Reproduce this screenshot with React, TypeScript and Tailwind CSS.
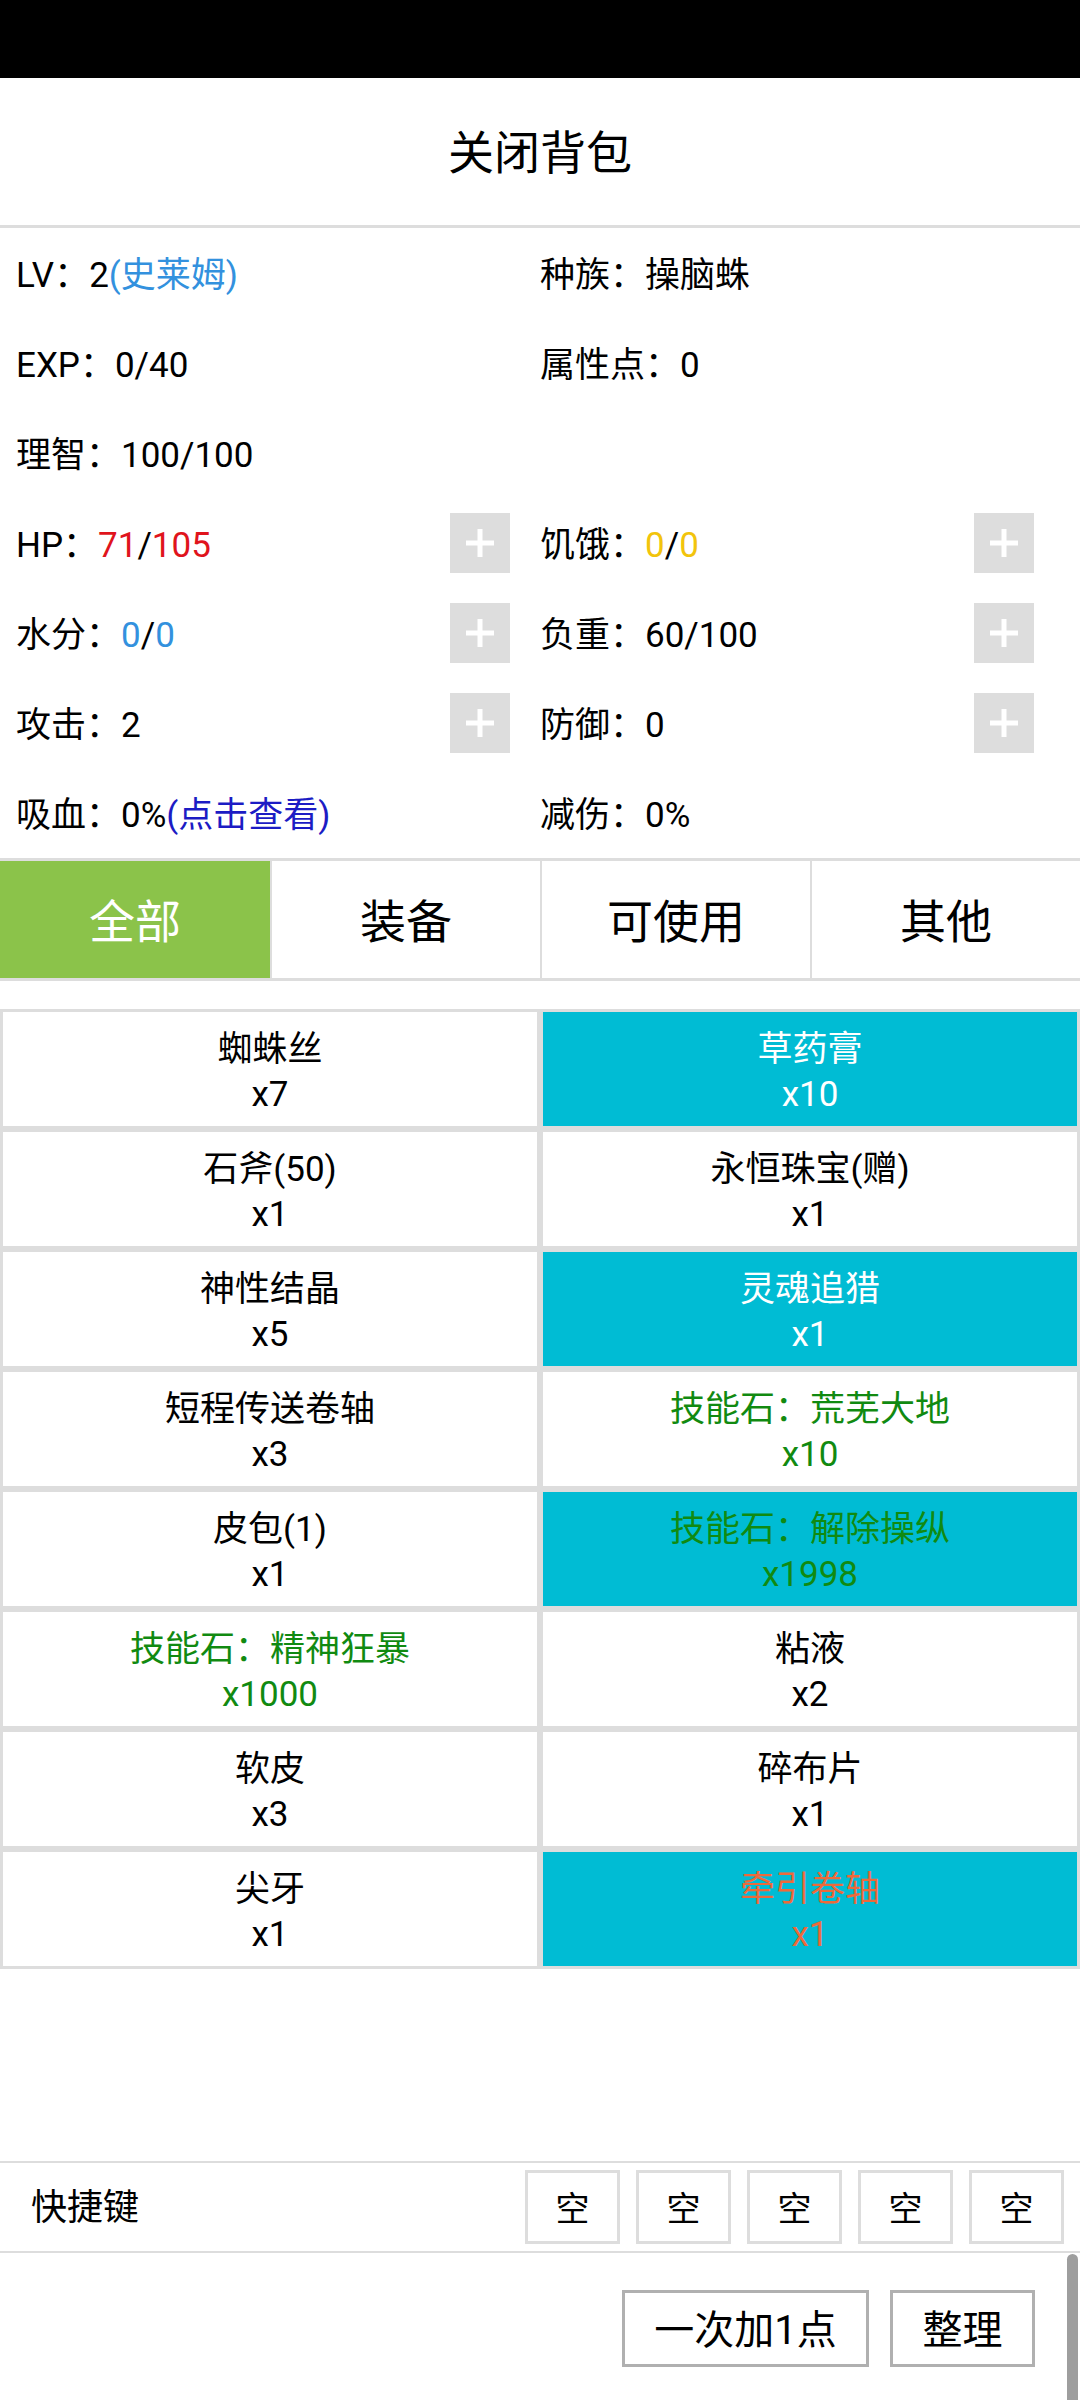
import React from "react";

const FONT = { fontFamily: "Roboto, 'Noto Sans CJK SC', 'Noto Sans', sans-serif" };

function Plus() {
  return (
    <div className="w-[60px] h-[60px] bg-[#dddddd] flex items-center justify-center shrink-0">
      <svg width="30" height="30" viewBox="0 0 30 30">
        <rect x="12.5" y="1" width="5" height="28" fill="#ffffff" />
        <rect x="1" y="12.5" width="28" height="5" fill="#ffffff" />
      </svg>
    </div>
  );
}

function Cell({ children, plus }: { children: React.ReactNode; plus?: boolean }) {
  return (
    <div className="w-[494px] h-[90px] flex items-center justify-between">
      <div className="text-[35px] text-black leading-none whitespace-nowrap pt-[4px]">{children}</div>
      {plus ? <Plus /> : null}
    </div>
  );
}

function Row({ children }: { children: React.ReactNode }) {
  return <div className="flex gap-[30px] pl-[16px]">{children}</div>;
}

type Item = { name: string; count: string; bg?: "cyan"; color?: "white" | "green" | "orange" };

const items: Item[] = [
  { name: "蜘蛛丝", count: "x7" },
  { name: "草药膏", count: "x10", bg: "cyan", color: "white" },
  { name: "石斧(50)", count: "x1" },
  { name: "永恒珠宝(赠)", count: "x1" },
  { name: "神性结晶", count: "x5" },
  { name: "灵魂追猎", count: "x1", bg: "cyan", color: "white" },
  { name: "短程传送卷轴", count: "x3" },
  { name: "技能石：荒芜大地", count: "x10", color: "green" },
  { name: "皮包(1)", count: "x1" },
  { name: "技能石：解除操纵", count: "x1998", bg: "cyan", color: "green" },
  { name: "技能石：精神狂暴", count: "x1000", color: "green" },
  { name: "粘液", count: "x2" },
  { name: "软皮", count: "x3" },
  { name: "碎布片", count: "x1" },
  { name: "尖牙", count: "x1" },
  { name: "牵引卷轴", count: "x1", bg: "cyan", color: "orange" },
];

function ItemCell({ it }: { it: Item }) {
  const bg = it.bg === "cyan" ? "bg-[#00bcd4]" : "bg-white";
  const color =
    it.color === "white"
      ? "text-white"
      : it.color === "green"
      ? "text-[#118a11]"
      : it.color === "orange"
      ? "text-[#ec6a3a]"
      : "text-black";
  return (
    <div className={`h-[114px] ${bg} ${color} flex flex-col items-center justify-center text-[35px] leading-[45px] pt-[6px]`}>
      <div>{it.name}</div>
      <div>{it.count}</div>
    </div>
  );
}

export default function App() {
  const slash = <span className="text-black">/</span>;
  return (
    <div className="relative w-[1080px] h-[2400px] bg-white flex flex-col overflow-hidden" style={FONT}>
      <div className="h-[78px] bg-black shrink-0" />
      <div className="h-[150px] shrink-0 flex items-center justify-center border-b-[3px] border-[#dddddd] text-[46px] text-black pt-[4px]">
        关闭背包
      </div>

      <div className="shrink-0">
        <Row>
          <Cell>
            LV：2<span className="text-[#3391de]">(史莱姆)</span>
          </Cell>
          <Cell>种族：操脑蛛</Cell>
        </Row>
        <Row>
          <Cell>EXP：0/40</Cell>
          <Cell>属性点：0</Cell>
        </Row>
        <Row>
          <Cell>理智：100/100</Cell>
        </Row>
        <Row>
          <Cell plus>
            HP：<span className="text-[#e0141c]">71</span>
            {slash}
            <span className="text-[#e0141c]">105</span>
          </Cell>
          <Cell plus>
            饥饿：<span className="text-[#f2c40c]">0</span>
            {slash}
            <span className="text-[#f2c40c]">0</span>
          </Cell>
        </Row>
        <Row>
          <Cell plus>
            水分：<span className="text-[#3391de]">0</span>
            {slash}
            <span className="text-[#3391de]">0</span>
          </Cell>
          <Cell plus>负重：60/100</Cell>
        </Row>
        <Row>
          <Cell plus>攻击：2</Cell>
          <Cell plus>防御：0</Cell>
        </Row>
        <Row>
          <Cell>
            吸血：0%<span className="text-[#1c1cc4]">(点击查看)</span>
          </Cell>
          <Cell>减伤：0%</Cell>
        </Row>
      </div>

      <div className="shrink-0 flex border-t-[3px] border-b-[3px] border-[#dddddd] h-[123px] text-[46px]">
        <div className="w-[270px] bg-[#8bc34a] text-white flex items-center justify-center pt-[6px]">全部</div>
        <div className="w-[270px] border-l-[2px] border-[#dddddd] flex items-center justify-center text-black pt-[6px]">装备</div>
        <div className="w-[270px] border-l-[2px] border-[#dddddd] flex items-center justify-center text-black pt-[6px]">可使用</div>
        <div className="flex-1 border-l-[2px] border-[#dddddd] flex items-center justify-center text-black pt-[6px]">其他</div>
      </div>

      <div className="h-[28px] shrink-0" />

      <div className="shrink-0 grid grid-cols-2 gap-[6px] p-[3px] bg-[#dddddd]">
        {items.map((it, i) => (
          <ItemCell key={i} it={it} />
        ))}
      </div>

      <div className="flex-1" />

      <div className="shrink-0 h-[92px] border-t-[2px] border-b-[2px] border-[#dddddd] flex items-center pl-[31px] pr-[16px]">
        <div className="text-[36px] text-black flex-1 pt-[2px]">快捷键</div>
        <div className="flex gap-[16px]">
          {[0, 1, 2, 3, 4].map((k) => (
            <div
              key={k}
              className="w-[95px] h-[74px] border-[3px] border-[#dddddd] flex items-center justify-center text-[34px] text-black pt-[4px]"
            >
              空
            </div>
          ))}
        </div>
      </div>

      <div className="shrink-0 h-[147px] flex items-start justify-end pt-[37px] pr-[45px] gap-[21px]">
        <div className="w-[247px] h-[77px] border-[3px] border-[#b0b0b0] flex items-center justify-center text-[40px] text-black pt-[4px]">
          一次加1点
        </div>
        <div className="w-[145px] h-[77px] border-[3px] border-[#b0b0b0] flex items-center justify-center text-[40px] text-black pt-[4px]">
          整理
        </div>
      </div>

      <div className="absolute right-[2px] top-[2254px] w-[11px] h-[160px] rounded-full bg-[#9e9e9e]" />
    </div>
  );
}
